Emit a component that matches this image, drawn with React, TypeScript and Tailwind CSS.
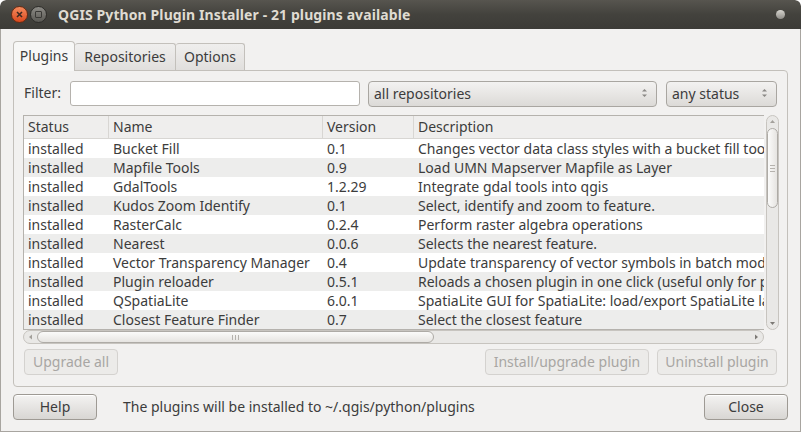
import React from 'react'

const rows = [
  ['Bucket Fill', '0.1', 'Changes vector data class styles with a bucket fill tool'],
  ['Mapfile Tools', '0.9', 'Load UMN Mapserver Mapfile as Layer'],
  ['GdalTools', '1.2.29', 'Integrate gdal tools into qgis'],
  ['Kudos Zoom Identify', '0.1', 'Select, identify and zoom to feature.'],
  ['RasterCalc', '0.2.4', 'Perform raster algebra operations'],
  ['Nearest', '0.0.6', 'Selects the nearest feature.'],
  ['Vector Transparency Manager', '0.4', 'Update transparency of vector symbols in batch mode'],
  ['Plugin reloader', '0.5.1', 'Reloads a chosen plugin in one click (useful only for plugin developers)'],
  ['QSpatiaLite', '6.0.1', 'SpatiaLite GUI for SpatiaLite: load/export SpatiaLite layers'],
  ['Closest Feature Finder', '0.7', 'Select the closest feature'],
]

function Spinner() {
  return (
    <svg width="7" height="12" viewBox="0 0 7 12" className="shrink-0">
      <path d="M1 4.5 L3.5 2 L6 4.5 Z" fill="#8a8885" />
      <path d="M1 7.5 L3.5 10 L6 7.5 Z" fill="#8a8885" />
    </svg>
  )
}

function Button({ label, disabled, className }: { label: string; disabled?: boolean; className: string }) {
  return (
    <div
      className={`h-[26px] pb-px flex items-center justify-center rounded-[4px] border ${
        disabled
          ? 'border-[#d4d2cf] bg-[#ecebe9] text-[#a8a6a3]'
          : 'border-[#9e9a94] bg-gradient-to-b from-[#f4f3f2] to-[#d8d6d3] text-[#3c3c3c] shadow-[inset_0_1px_0_#fff]'
      } ${className}`}
    >
      {label}
    </div>
  )
}

export default function App() {
  return (
    <div
      className="w-[801px] h-[432px] bg-[#f2f1f0] text-[#3c3c3c] text-[14px] leading-[19px] flex flex-col overflow-hidden rounded-t-[6px]"
      style={{ fontFamily: '"Noto Sans", "DejaVu Sans", sans-serif' }}
    >
      {/* title bar */}
      <div className="h-[29px] shrink-0 flex items-center bg-gradient-to-b from-[#57554f] via-[#43423d] to-[#3c3b37] rounded-t-[6px] px-[11px]">
        <div className="w-[17px] h-[17px] rounded-full bg-gradient-to-b from-[#f58a5c] to-[#d9471b] border border-[#6b2c14] flex items-center justify-center">
          <svg width="7" height="7" viewBox="0 0 7 7">
            <path d="M1 1 L6 6 M6 1 L1 6" stroke="#3c2a22" strokeWidth="1.6" />
          </svg>
        </div>
        <div className="w-[17px] h-[17px] ml-[2px] rounded-full bg-gradient-to-b from-[#8d8b86] to-[#5a5954] border border-[#2e2d2a] flex items-center justify-center">
          <div className="w-[7px] h-[7px] border border-[#3a3936] rounded-[1px]" />
        </div>
        <div className="ml-[11px] pb-px text-[14px] font-bold text-[#dfdbd2] tracking-[0.1px]">
          QGIS Python Plugin Installer - 21 plugins available
        </div>
        <div className="ml-auto mr-[5px] w-[9px] h-[9px] rounded-full bg-gradient-to-b from-[#d8d6d0] to-[#8e8c87]" />
      </div>

      <div className="flex-1 flex flex-col border-x border-b border-[#a8a5a0] px-[12px]">
        {/* tabs */}
        <div className="flex items-end h-[41px] pt-[10px]">
          <div className="h-[30px] w-[62px] pb-[3px] flex items-center justify-center bg-[#f7f7f6] border border-b-0 border-[#c3c0bb] rounded-t-[4px] relative top-[1px]">
            Plugins
          </div>
          <div className="h-[27px] w-[101px] pb-[2px] flex items-center justify-center bg-gradient-to-b from-[#efeeed] to-[#e1dfdd] border border-b-0 border-l-0 border-[#c3c0bb] rounded-t-[3px]">
            Repositories
          </div>
          <div className="h-[27px] w-[69px] pb-[2px] flex items-center justify-center bg-gradient-to-b from-[#efeeed] to-[#e1dfdd] border border-b-0 border-l-0 border-[#c3c0bb] rounded-t-[3px]">
            Options
          </div>
        </div>

        {/* panel */}
        <div className="h-[317px] border border-[#c3c0bb] rounded-b-[4px] rounded-tr-[4px] bg-[#f2f1f0] flex flex-col pl-[9px] pr-[10px]">
          {/* filter row */}
          <div className="flex items-center h-[25px] mt-[10px]">
            <span className="w-[47px] pl-px pb-[2px]">Filter:</span>
            <div className="w-[290px] h-[25px] bg-white border border-[#b5b2ad] rounded-[3px]" />
            <div className="ml-[8px] w-[289px] h-[26px] pb-px flex items-center px-[5px] border border-[#a9a6a1] rounded-[4px] bg-gradient-to-b from-[#f3f2f1] to-[#dcdad7]">
              <span>all repositories</span>
              <span className="ml-auto mr-[3px]"><Spinner /></span>
            </div>
            <div className="ml-[9px] w-[111px] h-[26px] pb-px flex items-center px-[5px] border border-[#a9a6a1] rounded-[4px] bg-gradient-to-b from-[#f3f2f1] to-[#dcdad7]">
              <span>any status</span>
              <span className="ml-auto mr-[3px]"><Spinner /></span>
            </div>
          </div>

          {/* table */}
          <div className="mt-[9px] flex">
            <div className="w-[741px] flex flex-col">
              <div className="h-[215px] border border-[#b5b2ad] border-r-0 bg-white overflow-hidden">
                <div className="flex h-[23px] bg-[#efeeed] border-b border-[#d8d6d3]">
                  <div className="w-[85px] pl-[4px] pb-[2px] flex items-center border-r border-[#d8d6d3]">Status</div>
                  <div className="w-[214px] pl-[4px] pb-[2px] flex items-center border-r border-[#d8d6d3]">Name</div>
                  <div className="w-[91px] pl-[4px] pb-[2px] flex items-center border-r border-[#d8d6d3]">Version</div>
                  <div className="flex-1 pl-[4px] pb-[2px] flex items-center">Description</div>
                </div>
                {rows.map((r, i) => (
                  <div key={r[0]} className={`flex h-[19px] pb-px items-center whitespace-nowrap ${i % 2 ? 'bg-[#ededec]' : 'bg-white'}`}>
                    <div className="w-[85px] pl-[4px] shrink-0">installed</div>
                    <div className="w-[214px] pl-[4px] shrink-0">{r[0]}</div>
                    <div className="w-[91px] pl-[4px] shrink-0">{r[1]}</div>
                    <div className="flex-1 pl-[4px] overflow-hidden">{r[2]}</div>
                  </div>
                ))}
              </div>
              {/* horizontal scrollbar */}
              <div className="h-[14px] flex items-center bg-[#e9e8e6] rounded-full border border-[#c7c4bf]">
                <svg width="12" height="12" viewBox="0 0 12 12" className="ml-[1px] shrink-0">
                  <path d="M7 3.5 L4 6 L7 8.5 Z" fill="#a3a09b" />
                </svg>
                <div className="w-[397px] h-[12px] rounded-full border border-[#aeaba6] bg-gradient-to-b from-[#fbfbfa] to-[#e6e4e1] flex items-center justify-center">
                  <div className="flex gap-[2px]">
                    <div className="w-px h-[5px] bg-[#b5b2ad]" />
                    <div className="w-px h-[5px] bg-[#b5b2ad]" />
                    <div className="w-px h-[5px] bg-[#b5b2ad]" />
                  </div>
                </div>
                <svg width="12" height="12" viewBox="0 0 12 12" className="ml-auto mr-[1px] shrink-0">
                  <path d="M5 3.5 L8 6 L5 8.5 Z" fill="#7c7975" />
                </svg>
              </div>
            </div>
            {/* vertical scrollbar */}
            <div className="w-[13px] ml-[2px] h-[215px] bg-[#e9e8e6] rounded-full border border-[#c7c4bf] flex flex-col items-center">
              <svg width="11" height="12" viewBox="0 0 11 12" className="shrink-0">
                <path d="M3 7 L5.5 4 L8 7 Z" fill="#a3a09b" />
              </svg>
              <div className="w-[11px] h-[80px] rounded-full border border-[#aeaba6] bg-gradient-to-r from-[#fbfbfa] to-[#e6e4e1] flex flex-col items-center justify-center gap-[2px]">
                <div className="w-[5px] h-px bg-[#b5b2ad]" />
                <div className="w-[5px] h-px bg-[#b5b2ad]" />
                <div className="w-[5px] h-px bg-[#b5b2ad]" />
              </div>
              <svg width="11" height="12" viewBox="0 0 11 12" className="mt-auto shrink-0">
                <path d="M3 5 L5.5 8 L8 5 Z" fill="#7c7975" />
              </svg>
            </div>
          </div>

          {/* action buttons */}
          <div className="flex mt-[5px] pl-px">
            <Button label="Upgrade all" disabled className="w-[94px]" />
            <Button label="Install/upgrade plugin" disabled className="ml-auto w-[164px]" />
            <Button label="Uninstall plugin" disabled className="ml-[8px] w-[120px]" />
          </div>
        </div>

        {/* footer */}
        <div className="flex items-center mt-[7px]">
          <Button label="Help" className="w-[84px]" />
          <span className="ml-[26px] pb-[2px]">The plugins will be installed to ~/.qgis/python/plugins</span>
          <Button label="Close" className="ml-auto w-[84px]" />
        </div>
      </div>
    </div>
  )
}
